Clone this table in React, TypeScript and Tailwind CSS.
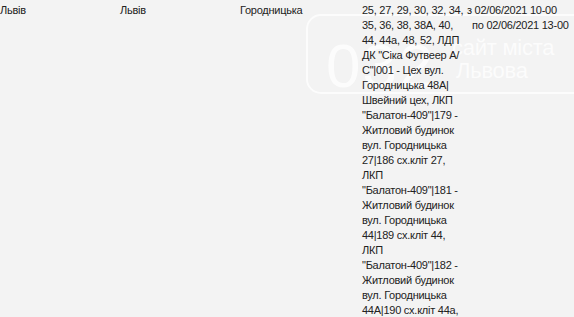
import React from 'react';

const addressLines = [
  '25, 27, 29, 30, 32, 34,',
  '35, 36, 38, 38А, 40,',
  '44, 44а, 48, 52, ЛДП',
  'ДК "Сіка Футвеер А/',
  'С"|001 - Цех вул.',
  'Городницька 48А|',
  'Швейний цех, ЛКП',
  '"Балатон-409"|179 -',
  'Житловий будинок',
  'вул. Городницька',
  '27|186 сх.кліт 27,',
  'ЛКП',
  '"Балатон-409"|181 -',
  'Житловий будинок',
  'вул. Городницька',
  '44|189 сх.кліт 44,',
  'ЛКП',
  '"Балатон-409"|182 -',
  'Житловий будинок',
  'вул. Городницька',
  '44А|190 сх.кліт 44а,',
];

function Watermark() {
  return (
    <svg
      className="pointer-events-none absolute left-[306px] top-[14px]"
      width="280"
      height="82"
      viewBox="0 0 280 82"
      opacity="0.75"
    >
      <rect x="1" y="1" width="300" height="78" rx="14" fill="none" stroke="#ffffff" strokeWidth="2" />
      <text x="20" y="73" fill="#ffffff" fontFamily="Liberation Sans, Arial, sans-serif" fontSize="62" fontWeight="300" letterSpacing="2">
        032
      </text>
      <text x="146" y="41" fill="#ffffff" fontFamily="Liberation Sans, Arial, sans-serif" fontSize="22">
        сайт міста
      </text>
      <text x="150" y="64" fill="#ffffff" fontFamily="Liberation Sans, Arial, sans-serif" fontSize="22">
        Львова
      </text>
    </svg>
  );
}

export default function App() {
  return (
    <div className="relative h-[317px] w-[574px] overflow-hidden bg-[#f3f3f3] font-['Liberation_Sans',Arial,sans-serif] text-[11px] leading-[15px] tracking-[-0.25px] text-[#222]">
      <Watermark />
      <div className="relative flex pt-[3px]">
        <div className="w-[120px]">Львів</div>
        <div className="w-[120px]">Львів</div>
        <div className="w-[122px]">Городницька</div>
        <div className="w-[105px]">
          {addressLines.map((line, i) => (
            <div key={i} className="whitespace-nowrap">{line}</div>
          ))}
        </div>
        <div className="whitespace-nowrap">
          <div>з 02/06/2021 10-00</div>
          <div className="pl-[5px]">по 02/06/2021 13-00</div>
        </div>
      </div>
    </div>
  );
}
